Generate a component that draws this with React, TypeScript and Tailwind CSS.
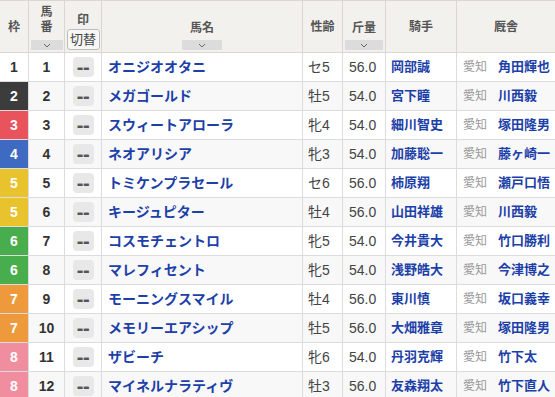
import React from "react";

const rows: [number, number, string, string, string, string, string][] = [
  [1, 1, "オニジオオタニ", "セ5", "56.0", "岡部誠", "角田輝也"],
  [2, 2, "メガゴールド", "牡5", "54.0", "宮下瞳", "川西毅"],
  [3, 3, "スウィートアローラ", "牝4", "54.0", "細川智史", "塚田隆男"],
  [4, 4, "ネオアリシア", "牝3", "54.0", "加藤聡一", "藤ヶ崎一"],
  [5, 5, "トミケンプラセール", "セ6", "56.0", "柿原翔", "瀬戸口悟"],
  [5, 6, "キージュピター", "牡4", "56.0", "山田祥雄", "川西毅"],
  [6, 7, "コスモチェントロ", "牝5", "54.0", "今井貴大", "竹口勝利"],
  [6, 8, "マレフィセント", "牝5", "54.0", "浅野皓大", "今津博之"],
  [7, 9, "モーニングスマイル", "牡4", "56.0", "東川慎", "坂口義幸"],
  [7, 10, "メモリーエアシップ", "牡5", "56.0", "大畑雅章", "塚田隆男"],
  [8, 11, "ザビーチ", "牝6", "54.0", "丹羽克輝", "竹下太"],
  [8, 12, "マイネルナラティヴ", "牡3", "56.0", "友森翔太", "竹下直人"],
];

const frameClass: Record<number, string> = {
  1: "bg-white text-[#333]",
  2: "bg-[#3c3c3c] text-white",
  3: "bg-[#e9545c] text-white",
  4: "bg-[#3e6bc1] text-white",
  5: "bg-[#e8c32e] text-white",
  6: "bg-[#48ad4c] text-white",
  7: "bg-[#ee9a3c] text-white",
  8: "bg-[#f08ea0] text-white",
};

const grid =
  "grid grid-cols-[29px_36px_37px_201px_40px_43px_71px_98px]";

function Chevron() {
  return (
    <svg width="8" height="5" viewBox="0 0 8 5" fill="none">
      <polyline points="1,1 4,4 7,1" stroke="#666" strokeWidth="1" />
    </svg>
  );
}

function DropBox({ w }: { w: string }) {
  return (
    <div className={`${w} h-[10px] bg-[#dcdcdc] flex items-center justify-center`}>
      <Chevron />
    </div>
  );
}

export default function App() {
  const font = {
    fontFamily: '"Liberation Sans", "Noto Sans CJK JP", sans-serif',
  };
  return (
    <div className="w-[555px] h-[397px] overflow-hidden bg-white" style={font}>
      {/* header */}
      <div
        className={`${grid} h-[53px] bg-[#f2f1ed] border-t border-b border-[#d9d7d0] text-[12px] font-bold text-[#555]`}
      >
        <div className="border-r border-[#d9d7d0] flex items-center justify-center pt-[1px]">枠</div>
        <div className="border-r border-[#d9d7d0] flex flex-col items-center pt-[4px] leading-[15px]">
          <span>馬</span>
          <span>番</span>
          <div className="mt-[5px] w-[32px]">
            <DropBox w="w-[32px]" />
          </div>
        </div>
        <div className="border-r border-[#d9d7d0] flex flex-col items-center pt-[11px] leading-[16px]">
          <span>印</span>
          <div className="mt-[1px] w-[33px] h-[21px] border border-[#bdbdbd] rounded-[3px] bg-[#f7f7f5] flex items-center justify-center font-normal text-[13px] text-[#444]">
            切替
          </div>
        </div>
        <div className="border-r border-[#d9d7d0] flex flex-col items-center pt-[19px] leading-[16px]">
          <span>馬名</span>
          <div className="mt-[4px]">
            <DropBox w="w-[40px]" />
          </div>
        </div>
        <div className="border-r border-[#d9d7d0] flex items-center justify-center pt-[1px]">性齢</div>
        <div className="border-r border-[#d9d7d0] flex flex-col items-center pt-[19px] leading-[16px]">
          <span>斤量</span>
          <div className="mt-[4px]">
            <DropBox w="w-[38px]" />
          </div>
        </div>
        <div className="border-r border-[#d9d7d0] flex items-center justify-center pt-[1px]">騎手</div>
        <div className="flex items-center justify-center pt-[1px]">厩舎</div>
      </div>
      {rows.map(([frame, num, name, sex, kin, jockey, trainer], i) => (
        <div
          key={num}
          className={`${grid} h-[29px] border-b border-[#dcdcdc] ${i % 2 === 1 ? "bg-[#f8f8f8]" : "bg-white"}`}
        >
          <div
            className={`${frameClass[frame]} border-r border-[#dcdcdc] flex items-center justify-center text-[14px] font-bold`}
          >
            {frame}
          </div>
          <div className="border-r border-[#dcdcdc] flex items-center justify-center text-[14px] font-bold text-[#333]">
            {num}
          </div>
          <div className="border-r border-[#dcdcdc] flex items-center justify-center">
            <div className="w-[21px] h-[20px] rounded-[4px] bg-[#e8e8e8] flex items-center justify-center">
              <span
                className="text-[20px] font-bold text-[#555] leading-none tracking-[-0.5px]"
                style={{ fontFamily: '"Liberation Sans", sans-serif', fontVariantLigatures: "none" }}
              >
                --
              </span>
            </div>
          </div>
          <div className="border-r border-[#dcdcdc] flex items-center pl-[6px] text-[14px] font-bold text-[#1d3fa8] whitespace-nowrap">
            {name}
          </div>
          <div className="border-r border-[#dcdcdc] flex items-center pl-[5px] text-[14px] text-[#444]">
            {sex}
          </div>
          <div className="border-r border-[#dcdcdc] flex items-center pl-[6px] text-[14px] text-[#444]">
            {kin}
          </div>
          <div className="border-r border-[#dcdcdc] flex items-center pl-[5px] text-[13px] font-bold text-[#1d3fa8] whitespace-nowrap">
            {jockey}
          </div>
          <div className="flex items-center pl-[6px] whitespace-nowrap">
            <span className="text-[12px] text-[#999] w-[35px]">愛知</span>
            <span className="text-[13px] font-bold text-[#1d3fa8]">{trainer}</span>
          </div>
        </div>
      ))}
    </div>
  );
}
